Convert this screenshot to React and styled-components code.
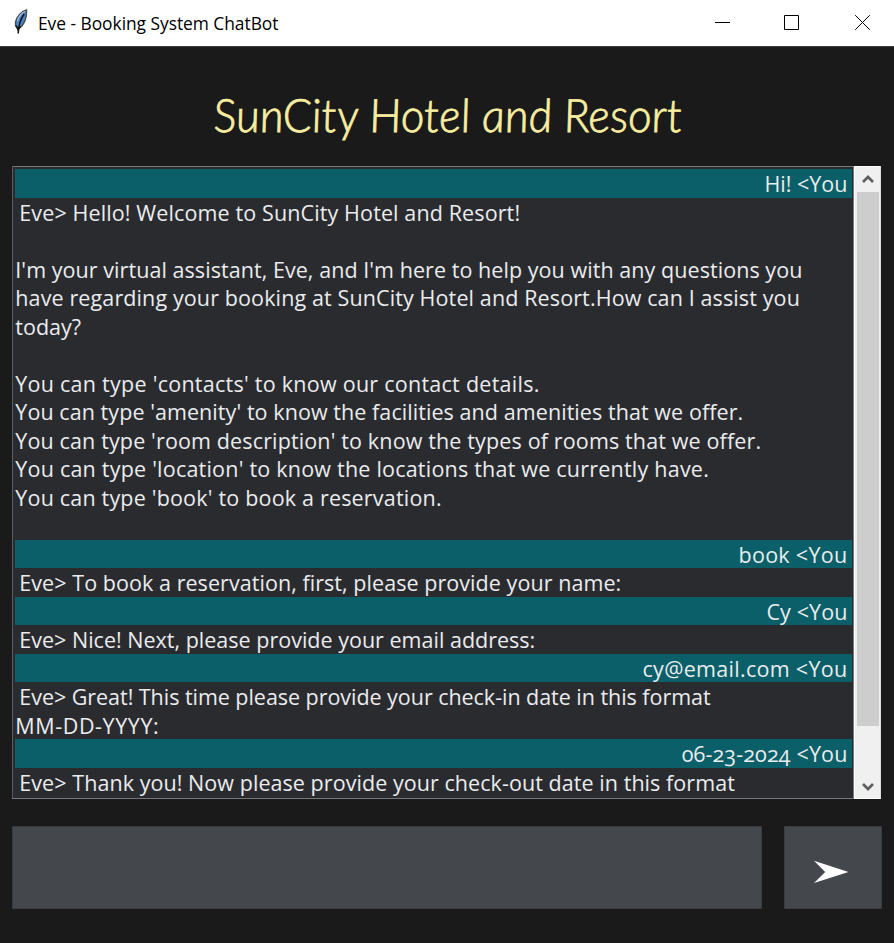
import React from "react";
import styled, { createGlobalStyle } from "styled-components";

const GlobalStyle = createGlobalStyle`
  * { box-sizing: border-box; }
  body { margin: 0; background: #1a1a1a; }
`;

const Window = styled.div`
  display: flex;
  flex-direction: column;
  width: 894px;
  height: 943px;
  overflow: hidden;
  background: #1a1a1a;
`;

const TitleBar = styled.header`
  display: flex;
  align-items: center;
  flex: none;
  height: 46px;
  padding-left: 12px;
  overflow: hidden;
  background: #fff;
  color: #000;
`;

const AppIcon = styled.svg`
  flex: none;
  width: 19px;
  height: 26px;
  margin-bottom: 2px;
`;

const Caption = styled.span`
  flex: none;
  width: 650px;
  margin-left: 7px;
  font: 17.4px/24px "Open Sans", sans-serif;
  letter-spacing: -0.04px;
  white-space: nowrap;
`;

const WindowButton = styled.button`
  display: flex;
  align-items: center;
  justify-content: center;
  flex: none;
  width: ${(p) => p.$width}px;
  height: 46px;
  padding: 0 0 1px;
  border: 0;
  background: none;
  color: #000;
`;

const Body = styled.main`
  display: flex;
  flex-direction: column;
  flex: 1;
  border-top: 1px solid #3c3c3c;
  padding: 0 12px;
`;

const Heading = styled.h1`
  margin: 0;
  height: 119px;
  padding-top: 38px;
  color: #f7eda0;
  font: italic 300 46px/60px Lato, sans-serif;
  -webkit-text-stroke: 0.8px #f7eda0;
  text-align: center;
  white-space: nowrap;
  transform: skewX(5deg);
`;

const Conversation = styled.section`
  display: flex;
  width: 869px;
  height: 633px;
`;

const Log = styled.div`
  width: 842px;
  height: 633px;
  padding: 2px 1px 0 2px;
  overflow: hidden;
  border: 1px solid #77787a;
  border-left-color: #5b5c5e;
  background: #2a2b2f;
`;

const Line = styled.div`
  height: 28.5px;
  padding: 0 4.5px 0 ${(p) => (p.$from === "eve" ? 4.3 : 0.3)}px;
  background: ${(p) => (p.$from === "you" ? "#0a5f69" : "transparent")};
  color: #eaecee;
  font: 21.5px/29px "Open Sans", sans-serif;
  font-feature-settings: "onum";
  letter-spacing: ${(p) => p.$tracking || 0}px;
  text-align: ${(p) => (p.$from === "you" ? "right" : "left")};
  white-space: nowrap;
`;

const Scrollbar = styled.div`
  display: flex;
  flex-direction: column;
  align-items: center;
  width: 27px;
  height: 633px;
  border: 1px solid #fff;
  border-right-color: #dcdcdc;
  background: #f0f0f0;
`;

const ScrollArrow = styled.div`
  display: flex;
  align-items: center;
  justify-content: center;
  width: 100%;
  height: 24.5px;
`;

const Track = styled.div`
  flex: 1;
`;

const Thumb = styled.div`
  width: 22px;
  height: 534px;
  background: #cdcdcd;
`;

const Composer = styled.footer`
  display: flex;
  gap: 22px;
  margin-top: 27px;
`;

const MessageInput = styled.input`
  width: 750px;
  height: 83px;
  padding: 0 8px;
  border: 1px solid #383b3f;
  outline: 0;
  background: #44474c;
  color: #eaecee;
  font: 21.5px "Open Sans", sans-serif;
`;

const SendButton = styled.button`
  display: flex;
  align-items: center;
  justify-content: center;
  width: 98px;
  height: 83px;
  padding: 8px 4px 0 0;
  border: 1px solid #383b3f;
  background: #44474c;
`;

const Feather = () => (
  <AppIcon viewBox="0 0 19 26">
    <path d="M14.500 .8C9.500 2 4.500 7.500 3.400 13.200L3.600 17L6 19.500L10 17C13 13 14.800 6 14.500 .8Z" fill="#4c84c4" stroke="#4b4b4b" strokeWidth="1.300" />
    <path d="M13.300 2.500C9.500 4 6.500 8 5.500 12" fill="none" stroke="#9dbbe0" strokeWidth="1.300" />
    <path d="M12.200 5C8.500 10 6.600 15 6.200 24.500" fill="none" stroke="#10151d" strokeWidth="1.500" />
    <path d="M4 16.500L6 20.500L8.800 17.500" fill="none" stroke="#111" strokeWidth="1.600" />
  </AppIcon>
);

const Chevron = ({ d }) => (
  <svg width="12" height="10" viewBox="0 0 12 10">
    <path d={d} fill="none" stroke="#606060" strokeWidth="2.700" />
  </svg>
);

const lines = [
  { from: "you", text: "Hi! <You" },
  { from: "eve", text: "Eve> Hello! Welcome to SunCity Hotel and Resort!", tracking: 0.12 },
  { text: "" },
  { text: "I'm your virtual assistant, Eve, and I'm here to help you with any questions you", tracking: 0.06 },
  { text: "have regarding your booking at SunCity Hotel and Resort.How can I assist you", tracking: 0.12 },
  { text: "today?" },
  { text: "" },
  { text: "You can type 'contacts' to know our contact details.", tracking: 0.26 },
  { text: "You can type 'amenity' to know the facilities and amenities that we offer.", tracking: 0.07 },
  { text: "You can type 'room description' to know the types of rooms that we offer.", tracking: 0.14 },
  { text: "You can type 'location' to know the locations that we currently have.", tracking: 0.22 },
  { text: "You can type 'book' to book a reservation.", tracking: 0.19 },
  { text: "" },
  { from: "you", text: "book <You", tracking: 0.3 },
  { from: "eve", text: "Eve> To book a reservation, first, please provide your name:", tracking: 0.06 },
  { from: "you", text: "Cy <You", tracking: 0.1 },
  { from: "eve", text: "Eve> Nice! Next, please provide your email address:", tracking: 0.01 },
  { from: "you", text: "cy@email.com <You", tracking: 0.3 },
  { from: "eve", text: "Eve> Great! This time please provide your check-in date in this format", tracking: -0.04 },
  { text: "MM-DD-YYYY:", tracking: 0.6 },
  { from: "you", text: "06-23-2024 <You", tracking: 0.15 },
  { from: "eve", text: "Eve> Thank you! Now please provide your check-out date in this format", tracking: 0.06 },
];

export default function App() {
  return (
    <Window>
      <GlobalStyle />
      <TitleBar>
        <Feather />
        <Caption>Eve - Booking System ChatBot</Caption>
        <WindowButton $width={69} aria-label="Minimize">
          <svg width="15" height="15"><path d="M0 7.500H15" stroke="currentColor" /></svg>
        </WindowButton>
        <WindowButton $width={69} aria-label="Maximize">
          <svg width="15" height="15"><path d="M.5.5H14.500V14.500H.5Z" fill="none" stroke="currentColor" /></svg>
        </WindowButton>
        <WindowButton $width={73} aria-label="Close">
          <svg width="15" height="15"><path d="M.2.200L14.800 14.800M14.800.2L.2 14.800" stroke="currentColor" /></svg>
        </WindowButton>
      </TitleBar>
      <Body>
        <Heading>SunCity Hotel and Resort</Heading>
        <Conversation>
          <Log>
            {lines.map((line, i) => (
              <Line key={i} $from={line.from} $tracking={line.tracking}>{line.text}</Line>
            ))}
          </Log>
          <Scrollbar>
            <ScrollArrow><Chevron d="M1 8L6 3L11 8" /></ScrollArrow>
            <Thumb />
            <Track />
            <ScrollArrow><Chevron d="M1 3L6 8L11 3" /></ScrollArrow>
          </Scrollbar>
        </Conversation>
        <Composer>
          <MessageInput aria-label="Message" />
          <SendButton aria-label="Send">
            <svg width="36" height="24" viewBox="0 0 36 24">
              <path d="M1 .8L35.500 12L1 23L12.200 12Z" fill="#fff" />
            </svg>
          </SendButton>
        </Composer>
      </Body>
    </Window>
  );
}
